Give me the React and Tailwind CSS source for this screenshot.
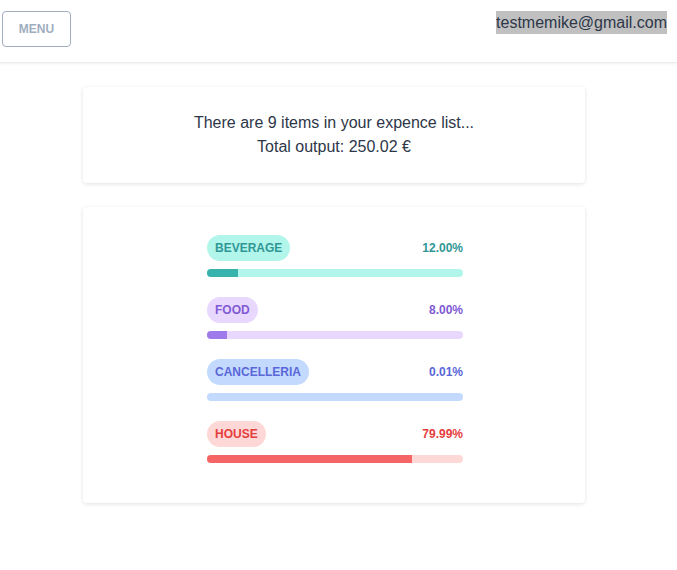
const CATEGORIES = [
  { name: "Beverage", pct: "12.00%", w: 12, badge: "bg-[#b2f5ea] text-[#319795]", pctColor: "text-[#319795]", track: "bg-[#b2f5ea]", fill: "bg-[#38b2ac]" },
  { name: "Food", pct: "8.00%", w: 8, badge: "bg-[#e9d8fd] text-[#805ad5]", pctColor: "text-[#805ad5]", track: "bg-[#e9d8fd]", fill: "bg-[#9f7aea]" },
  { name: "Cancelleria", pct: "0.01%", w: 0.01, badge: "bg-[#c3dafe] text-[#5a67d8]", pctColor: "text-[#5a67d8]", track: "bg-[#c3dafe]", fill: "bg-[#7f9cf5]" },
  { name: "House", pct: "79.99%", w: 79.99, badge: "bg-[#fed7d7] text-[#e53e3e]", pctColor: "text-[#e53e3e]", track: "bg-[#fed7d7]", fill: "bg-[#f56565]" },
]

function Progress({ cat }) {
  return (
    <div className="relative pt-1">
      <div className="flex mb-2 items-center justify-between">
        <span className={`text-xs font-bold inline-block py-[5px] px-2 uppercase rounded-full ${cat.badge}`}>
          {cat.name}
        </span>
        <span className={`text-xs font-bold ${cat.pctColor}`}>{cat.pct}</span>
      </div>
      <div className={`overflow-hidden h-2 mb-4 flex rounded ${cat.track}`}>
        <div className={cat.fill} style={{ width: `${cat.w}%` }} />
      </div>
    </div>
  )
}

export default function App() {
  return (
    <div className="min-h-[570px] bg-white text-[#2d3748] font-['Liberation_Sans',Arial,sans-serif]">
      <header className="h-[63px] flex items-start justify-between pl-[2px] pr-[10px] pt-[11px] border-b border-[#ececec] shadow-[0_1px_2px_rgba(0,0,0,0.06)]">
        <button
          type="button"
          className="w-[69px] h-[36px] border border-[#a0aec0] rounded text-[#a0aec0] text-xs font-bold uppercase"
        >
          Menu
        </button>
        <span className="bg-[#c0c0c0] text-[#2d3748] text-base leading-[23px]">
          testmemike@gmail.com
        </span>
      </header>

      <main className="pl-[83px] pt-6 flex flex-col gap-6">
        <div className="w-[502px] bg-white rounded shadow-[0_1px_4px_rgba(0,0,0,0.12)] py-6 text-center text-base leading-6">
          <p>There are 9 items in your expence list...</p>
          <p>Total output: 250.02 €</p>
        </div>

        <div className="w-[502px] bg-white rounded shadow-[0_1px_4px_rgba(0,0,0,0.12)] pt-6 pb-6 pl-[124px]">
          <div className="w-[256px]">
            {CATEGORIES.map((c) => (
              <Progress key={c.name} cat={c} />
            ))}
          </div>
        </div>
      </main>
    </div>
  )
}
